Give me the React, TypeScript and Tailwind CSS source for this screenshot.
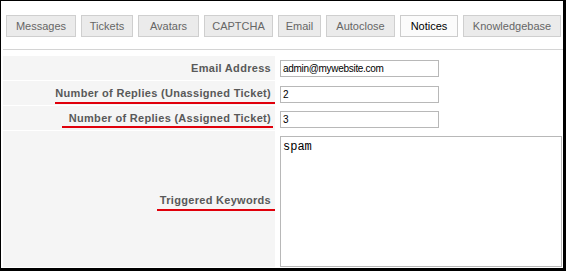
import React from "react";

const tabs: { label: string; w: string; active?: boolean }[] = [
  { label: "Messages", w: "w-[70px]" },
  { label: "Tickets", w: "w-[52px]" },
  { label: "Avatars", w: "w-[61px]" },
  { label: "CAPTCHA", w: "w-[69px]" },
  { label: "Email", w: "w-[43px]" },
  { label: "Autoclose", w: "w-[69px]" },
  { label: "Notices", w: "w-[58px]", active: true },
  { label: "Knowledgebase", w: "w-[98px]" },
];

const labelCls =
  "relative w-[272px] bg-[#f5f5f5] flex items-center justify-end pr-[4px] text-[11px] font-bold tracking-[0.3px] text-[#595959]";

const inputCls =
  "w-[159px] h-[17px] border border-[#b8b8b8] bg-white pl-[2px] text-[10px] tracking-[-0.3px] text-black flex items-center";

export default function App() {
  return (
    <div
      className="w-[566px] h-[271px] overflow-hidden bg-white border-t border-l border-r-[3px] border-b-[3px] border-black"
      style={{ fontFamily: '"Liberation Sans", Arial, sans-serif' }}
    >
      <div className="pl-[2px]">
        <div className="flex gap-[5px] mt-[14px] ml-[3px]">
          {tabs.map((t) => (
            <div
              key={t.label}
              className={`${t.w} h-[22px] flex items-center justify-center border text-[11px] ${
                t.active
                  ? "bg-[#fbfbfb] border-[#cccccc] text-black"
                  : "bg-[#ebebeb] border-[#cfcfcf] text-[#666666]"
              }`}
            >
              {t.label}
            </div>
          ))}
        </div>
        <div className="mt-[12px] h-px bg-[#d4d4d4]" />
        <div className="mt-[6px] flex flex-col gap-px">
          <div className="flex h-[24px]">
            <div className={labelCls}>Email Address</div>
            <div className="ml-[5px] flex items-center pt-px">
              <div className={inputCls}>admin@mywebsite.com</div>
            </div>
          </div>
          <div className="flex h-[24px]">
            <div className={labelCls}>
              Number of Replies (Unassigned Ticket)
              <div className="absolute left-[52px] right-0 top-[21px] h-[2px] bg-[#e0000b]" />
            </div>
            <div className="ml-[5px] flex items-center pt-[2px]">
              <div className={inputCls}>2</div>
            </div>
          </div>
          <div className="flex h-[24px]">
            <div className={labelCls}>
              Number of Replies (Assigned Ticket)
              <div className="absolute left-[59px] right-[2px] top-[20px] h-[2px] bg-[#e0000b]" />
            </div>
            <div className="ml-[5px] flex items-center pt-[2px]">
              <div className={inputCls}>3</div>
            </div>
          </div>
          <div className="flex h-[136px]">
            <div className={`${labelCls} pt-[3px]`}>
              Triggered Keywords
              <div className="absolute left-[154px] right-0 top-[78px] h-[2px] bg-[#e0000b]" />
            </div>
            <div className="ml-[5px] pt-[5px]">
              <div
                className="w-[282px] h-[131px] border border-[#b8b8b8] bg-white pl-[2px] pt-[4px] text-[12px] leading-[12px] text-black"
                style={{ fontFamily: '"Liberation Mono", "Courier New", monospace' }}
              >
                spam
              </div>
            </div>
          </div>
        </div>
      </div>
    </div>
  );
}
